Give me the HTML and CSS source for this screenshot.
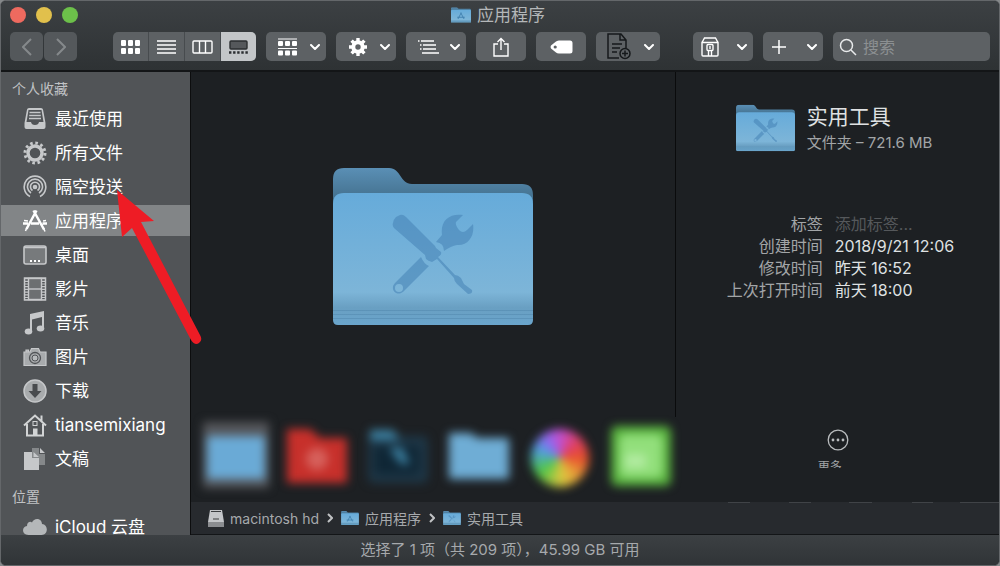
FILE: index.html
```html
<!DOCTYPE html>
<html lang="zh-CN">
<head>
    <meta charset="UTF-8">
    <meta name="viewport" content="width=device-width, initial-scale=1.0">
    <title>应用程序</title>
    <link rel="stylesheet" href="styles.css">
</head>
<body>
    <!-- shared shapes -->
    <svg class="defs" width="0" height="0" aria-hidden="true">
        <defs>
            <linearGradient id="folderBack" x1="0" y1="0" x2="0" y2="1">
                <stop offset="0" stop-color="#5a8fb5"/>
                <stop offset="1" stop-color="#3d6883"/>
            </linearGradient>
            <linearGradient id="folderFront" x1="0" y1="0" x2="0" y2="1">
                <stop offset="0" stop-color="#66abda"/>
                <stop offset="0.75" stop-color="#7db5d8"/>
                <stop offset="0.87" stop-color="#699fc2"/>
                <stop offset="1" stop-color="#6aa5cc"/>
            </linearGradient>
            <symbol id="folder" viewBox="0 0 200 157">
                <path fill="url(#folderBack)" d="M0 40V11Q0 0 11 0H56C68 0 67 16 79 16H189Q200 16 200 27V40z"/>
                <path fill="url(#folderFront)" d="M0 36Q0 25 11 25H189Q200 25 200 36V152Q200 157 195 157H5Q0 157 0 152z"/>
                <path stroke="#4f86ab" stroke-opacity="0.5" d="M0 142.500H200M0 146.500H200M0 150.500H200"/>
            </symbol>
            <symbol id="tools" viewBox="0 0 200 157">
                <path d="M60 55Q60 52 63 49L67 47Q70 46 73 49L102 78L103 80L108 84Q109 87 105 89L122 107Q125 107 128 110L131 116L139 122Q140 126 135 126L124 116Q121 113 121 110L104 91L99 94Q95 93 93 91L92 87L61 60Q59 57 60 55z"/>
                <path d="M103 74L109 67C107 52 117 45 130 47L123 54Q122 57 126 62Q130 66 134 62L140 56C142 68 135 78 124 77Q118 78 111 83Q111 75 103 74z"/>
                <path fill-rule="evenodd" d="M88 89Q91 96 96 98L72 122C64 131 56 121 62 115zM70 120A4 4 0 1 0 62 120A4 4 0 1 0 70 120z"/>
            </symbol>
            <symbol id="appmark" viewBox="0 0 200 157">
                <path fill="none" stroke="currentColor" stroke-width="9" d="M70 118L103 55M97 55L130 118M62 101H138"/>
            </symbol>
            <symbol id="chevron" viewBox="0 0 10 6">
                <path fill="none" stroke="currentColor" stroke-width="2" stroke-linecap="round" stroke-linejoin="round" d="M1 1L5 5L9 1"/>
            </symbol>
        </defs>
    </svg>

    <div class="window">
        <header class="titlebar">
            <div class="title-row">
                <div class="lights">
                    <button class="light light-close" aria-label="关闭"></button>
                    <button class="light light-min" aria-label="最小化"></button>
                    <button class="light light-max" aria-label="缩放"></button>
                </div>
                <h1 class="title">
                    <svg class="title-icon" viewBox="0 0 200 157"><use href="#folder"/><use href="#appmark"/></svg>
                    应用程序
                </h1>
            </div>

            <div class="toolbar">
                <div class="nav">
                    <button class="btn btn-nav" aria-label="后退"><svg width="10" height="18" viewBox="0 0 10 18"><path d="M9 1L1 9L9 17"/></svg></button>
                    <button class="btn btn-nav" aria-label="前进"><svg width="10" height="18" viewBox="0 0 10 18"><path d="M1 1L9 9L1 17"/></svg></button>
                </div>

                <div class="segmented">
                    <button aria-label="图标">
                        <svg width="19" height="14" viewBox="0 0 19 14" fill="#fff"><rect width="5" height="6" rx="1"/><rect x="7" width="5" height="6" rx="1"/><rect x="14" width="5" height="6" rx="1"/><rect y="8" width="5" height="6" rx="1"/><rect x="7" y="8" width="5" height="6" rx="1"/><rect x="14" y="8" width="5" height="6" rx="1"/></svg>
                    </button>
                    <button aria-label="列表">
                        <svg width="19" height="14" viewBox="0 0 19 14"><path stroke="#fff" stroke-width="1.300" d="M0 1H19M0 5H19M0 9H19M0 13H19"/></svg>
                    </button>
                    <button aria-label="分栏">
                        <svg width="21" height="14" viewBox="0 0 21 14" fill="none" stroke="#fff" stroke-width="1.400"><rect x="1" y="1" width="19" height="12" rx="1"/><path d="M7.500 1V13M13.500 1V13"/></svg>
                    </button>
                    <button class="active" aria-label="画廊">
                        <svg width="19" height="14" viewBox="0 0 19 14"><rect x="1" y="1" width="17" height="8" rx="1" fill="#55585b" stroke="#2b2e30" stroke-width="1.400"/><path stroke="#2b2e30" stroke-width="2.400" stroke-dasharray="2.400 1.700" d="M0 12.500H19"/></svg>
                    </button>
                </div>

                <button class="btn btn-menu" aria-label="分组">
                    <svg width="20" height="18" viewBox="0 0 20 18" fill="#fff"><path stroke="#fff" d="M0 1H19M0 10.500H19"/><rect y="3" width="5" height="5" rx="1"/><rect x="7" y="3" width="5" height="5" rx="1"/><rect x="14" y="3" width="5" height="5" rx="1"/><rect y="12.500" width="5" height="5" rx="1"/><rect x="7" y="12.500" width="5" height="5" rx="1"/><rect x="14" y="12.500" width="5" height="5" rx="1"/></svg>
                    <svg class="chev"><use href="#chevron"/></svg>
                </button>
                <button class="btn btn-menu" aria-label="操作">
                    <svg width="20" height="20" viewBox="-10 -10 20 20"><circle r="4.700" fill="none" stroke="#fff" stroke-width="4"/><path stroke="#fff" stroke-width="3.400" d="M0-9V-5M0 9V5M-9 0H-5M9 0H5M-6.400-6.400L-4-4M6.400 6.400L4 4M-6.400 6.400L-4 4M6.400-6.400L4-4"/></svg>
                    <svg class="chev"><use href="#chevron"/></svg>
                </button>
                <button class="btn btn-menu" aria-label="排列">
                    <svg width="22" height="14" viewBox="0 0 22 14"><path stroke="#fff" stroke-width="1.300" d="M0 1H1.500M3 1H16M2 5H3.500M5 5H18M2 9H3.500M5 9H18M4 13H21"/></svg>
                    <svg class="chev"><use href="#chevron"/></svg>
                </button>
                <button class="btn btn-wide" aria-label="共享">
                    <svg width="16" height="20" viewBox="0 0 16 20" fill="none" stroke="#fff" stroke-width="1.400"><path d="M5 7H1V19H15V7H11M8 13V1.500M4.500 5L8 1.500L11.500 5"/></svg>
                </button>
                <button class="btn btn-wide" aria-label="标签">
                    <svg width="23" height="14" viewBox="0 0 23 14"><path fill="#fff" fill-rule="evenodd" d="M6 1.500Q8 0.500 9 0.500H20Q22.500 0.500 22.500 3V11Q22.500 13.500 20 13.500H9Q7 13.500 6 12.500L1 8.500Q0 7 1 5.500zM6.800 7A1.600 1.600 0 1 0 3.600 7A1.600 1.600 0 1 0 6.800 7z"/></svg>
                </button>
                <button class="btn btn-doc" aria-label="新建文件">
                    <svg width="24" height="27" viewBox="0 0 24 27" fill="none" stroke="#16191b" stroke-width="1.500"><path d="M12 25H1V1H14L19 7V15M13 1V7H19M5 11H15M5 15H13M5 19H10"/><circle cx="18" cy="20.500" r="5"/><path d="M15 20.500H21M18 17.500V23.500"/></svg>
                    <svg class="chev"><use href="#chevron"/></svg>
                </button>

                <button class="btn btn-menu btn-archive" aria-label="压缩">
                    <svg width="18" height="20" viewBox="0 0 18 20" fill="none" stroke="#fff" stroke-width="1.400"><path d="M1 5.500V18Q1 19 2 19H16Q17 19 17 18V5.500zM1 5.500L3.500 1H14.500L17 5.500"/><rect x="6" y="7.500" width="6" height="6" rx="1"/><path d="M9 9V12M7.500 14V19M10.500 14V19"/></svg>
                    <svg class="chev"><use href="#chevron"/></svg>
                </button>
                <button class="btn btn-menu btn-add" aria-label="添加">
                    <svg width="16" height="16" viewBox="0 0 16 16"><path stroke="#fff" stroke-width="1.500" d="M8 1V15M1 8H15"/></svg>
                    <svg class="chev"><use href="#chevron"/></svg>
                </button>
                <label class="search">
                    <svg width="18" height="18" viewBox="0 0 18 18" fill="none" stroke="#e8eaeb" stroke-width="1.500"><circle cx="7.500" cy="7.500" r="6"/><path d="M12 12L17 17"/></svg>
                    <input type="search" placeholder="搜索" aria-label="搜索">
                </label>
            </div>
        </header>

        <main class="main">
            <nav class="sidebar">
                <h2>个人收藏</h2>
                <ul>
                    <li><a href="#"><svg viewBox="0 0 24 24"><path fill="#c6c8ca" fill-rule="evenodd" d="M4 2.500Q4.300 1 6 1H18Q19.700 1 20 2.500L22.500 16V20Q22.500 22 20.500 22H3.500Q1.500 22 1.500 20V16zM5.500 3L3.500 15H8Q8.500 18 12 18T16 15H20.500L18.500 3z"/><path stroke="#c6c8ca" stroke-width="1.300" d="M6.500 5.500H17.500M6.200 8.500H17.800M6 11.500H18"/></svg>最近使用</a></li>
                    <li><a href="#"><svg viewBox="-12 -12 24 24"><circle r="7" fill="none" stroke="#c6c8ca" stroke-width="3.400"/><circle r="10" fill="none" stroke="#c6c8ca" stroke-width="3" stroke-dasharray="2.600 2.636"/></svg>所有文件</a></li>
                    <li><a href="#"><svg viewBox="0 0 24 24" fill="none" stroke="#c6c8ca" stroke-width="1.600"><path d="M7 21.500A10.800 10.800 0 1 1 17 21.500M8 18A7.500 7.500 0 1 1 16 18M9.500 15.500A4.500 4.500 0 1 1 14.500 15.500"/><circle cx="12" cy="12" r="1.500" fill="#c6c8ca"/></svg>隔空投送</a></li>
                    <li><a class="selected" href="#"><svg viewBox="0 0 24 24" fill="none" stroke="#fff" stroke-width="2.500"><path d="M10.500 1.500L21 20.500M13.500 1.500L3.500 20M0 14.500H5M8 14.500H16M19.500 14.500H24"/><path stroke-width="1.500" d="M20 18L22 22.500M4 18L2.500 22M1 11.500L5 12M23 11.500L20 12"/></svg>应用程序</a></li>
                    <li><a href="#"><svg viewBox="0 0 24 24"><rect x="1" y="3" width="22" height="18" rx="2" fill="#777a7c" stroke="#c6c8ca" stroke-width="1.600"/><path stroke="#c6c8ca" stroke-width="1.600" d="M1 4.500H23"/><path stroke="#fff" stroke-width="2" stroke-dasharray="2 2" d="M7 18H17"/></svg>桌面</a></li>
                    <li><a href="#"><svg viewBox="0 0 24 24" fill="none" stroke="#c6c8ca"><rect x="1.500" y="1" width="21" height="22" stroke-width="1.500"/><rect x="5.500" y="1.500" width="13" height="21" fill="#6c6f71" stroke-width="1.400"/><path stroke-width="1.400" d="M5.500 12H18.500"/><path stroke-width="3" stroke-dasharray="1.200 1.500" d="M3.500 1V23M20.500 1V23"/></svg>影片</a></li>
                    <li><a href="#"><svg viewBox="0 0 24 24" fill="#c6c8ca"><path d="M7 3L21 0V17H19V6L9 8.500V20H7z"/><ellipse cx="5.500" cy="20.500" rx="3.800" ry="3"/><ellipse cx="17.500" cy="17.500" rx="3.800" ry="3"/></svg>音乐</a></li>
                    <li><a href="#"><svg viewBox="0 0 24 24"><path fill="#a8abad" stroke="#c6c8ca" stroke-width="1.200" d="M1 7H7L8.500 3.500H15.500L17 7H23V20.500H1zM3 5H5.500V7H3z"/><circle cx="12" cy="13" r="5.500" fill="#a8abad" stroke="#515457" stroke-width="1.300"/><circle cx="12" cy="13" r="3" fill="#b8bbbd" stroke="#515457"/></svg>图片</a></li>
                    <li><a href="#"><svg viewBox="0 0 24 24"><circle cx="12" cy="12" r="11" fill="#a8abad" stroke="#c6c8ca" stroke-width="1.500"/><path fill="#484b4e" d="M9.500 5H14.500V12H18.500L12 19L5.500 12H9.500z"/></svg>下载</a></li>
                    <li><a href="#"><svg viewBox="0 0 24 24"><path fill="none" stroke="#d2d4d5" stroke-width="2" d="M1 12.500L12 2.500L23 12.500M4 11V22.500H20V11M18.500 8V2.500"/><rect x="10" y="8.500" width="4" height="4" fill="none" stroke="#d2d4d5"/><rect x="10" y="15.500" width="4.500" height="7" fill="#d2d4d5"/></svg>tiansemixiang</a></li>
                    <li><a href="#"><svg viewBox="0 0 24 24"><path fill="#85888a" d="M9 1H16V7H22V18H9z"/><path fill="#c6c8ca" d="M17 1L22 6H17zM1 5H9V11H16V23H1zM10.500 5L16 10H10.500z"/></svg>文稿</a></li>
                </ul>
                <h2>位置</h2>
                <ul>
                    <li><a href="#"><svg viewBox="0 0 24 24"><path fill="#b4b7b9" d="M5.500 20C-1.500 20-1.500 11.500 4 11C4 7 7.500 6 9 7.500C11 2 19 3 19 9C25.500 9.500 25.500 20 18.500 20z"/></svg>iCloud 云盘</a></li>
                </ul>
            </nav>

            <div class="content">
                <div class="browser">
                    <section class="gallery">
                        <div class="preview">
                            <svg class="preview-icon" viewBox="0 0 200 157"><use href="#folder"/><use class="ink" href="#tools"/></svg>
                        </div>
                        <div class="strip">
                            <button class="thumb thumb-selected" aria-label="实用工具"><svg viewBox="0 0 66 66"><rect x="4" y="14" width="58" height="43" fill="#6aaad6"/></svg></button>
                            <button class="thumb" aria-label="红色文件夹"><svg viewBox="0 0 66 66"><path fill="#c7302b" d="M3 7H26L36 16H63V61H3z"/><circle cx="33" cy="37" r="11" fill="#d6605b"/></svg></button>
                            <button class="thumb" aria-label="深色文件夹"><svg viewBox="0 0 66 66"><rect x="3" y="14" width="60" height="47" rx="5" fill="#1e3646"/><rect x="10" y="24" width="44" height="28" rx="3" fill="#0f2635"/><path fill="#3c81a2" d="M5 8H28L35 18H5zM24 26H37L45 42H36z"/></svg></button>
                            <button class="thumb" aria-label="文件夹"><svg viewBox="0 0 66 66"><path fill="#6fadd5" d="M3 11H25L31 16H63V57H3z"/></svg></button>
                            <button class="thumb" aria-label="色轮"><span class="wheel"></span></button>
                            <button class="thumb" aria-label="绿色应用"><svg viewBox="0 0 66 66"><rect x="3" y="4" width="60" height="60" rx="6" fill="#57b13d"/><rect x="11" y="12" width="44" height="44" rx="6" fill="#92df7b"/><path fill="#b1eba0" d="M17 32H38V46H17z"/></svg></button>
                        </div>
                    </section>

                    <aside class="inspector">
                        <div class="file">
                            <svg class="file-icon" viewBox="0 0 200 157"><use href="#folder"/><use class="ink" href="#tools"/></svg>
                            <div>
                                <h2 class="file-name">实用工具</h2>
                                <p class="file-kind">文件夹 – 721.6 MB</p>
                            </div>
                        </div>
                        <dl class="info">
                            <dt><label for="tags">标签</label></dt>
                            <dd><input id="tags" type="text" placeholder="添加标签..."></dd>
                            <dt>创建时间</dt>
                            <dd>2018/9/21 12:06</dd>
                            <dt>修改时间</dt>
                            <dd>昨天 16:52</dd>
                            <dt>上次打开时间</dt>
                            <dd>前天 18:00</dd>
                        </dl>
                        <button class="more">
                            <svg width="22" height="22" viewBox="0 0 22 22"><circle cx="11" cy="11" r="9.800" fill="none" stroke="#b9bcbe" stroke-width="1.300"/><g fill="#b9bcbe"><circle cx="6" cy="11" r="1.400"/><circle cx="11" cy="11" r="1.400"/><circle cx="16" cy="11" r="1.400"/></g></svg>
                            <span>更多</span>
                        </button>
                    </aside>
                </div>

                <div class="pathbar">
                    <svg class="path-disk" viewBox="0 0 16 17"><path fill="#c4c6c9" d="M2 0H14L16 12V16H0V12z"/><path fill="#8b8d90" d="M0 12H16V17H0z"/><path stroke="#3a3c3f" stroke-width="1.200" d="M3 1.500H13M5 9H11"/></svg>
                    <a href="#">macintosh hd</a>
                    <svg class="path-arrow" viewBox="0 0 6 10"><path d="M1 1L5 5L1 9"/></svg>
                    <svg class="path-icon" viewBox="0 0 200 157"><use href="#folder"/><use href="#appmark"/></svg>
                    <a href="#">应用程序</a>
                    <svg class="path-arrow" viewBox="0 0 6 10"><path d="M1 1L5 5L1 9"/></svg>
                    <svg class="path-icon" viewBox="0 0 200 157"><use href="#folder"/><use class="ink" href="#tools"/></svg>
                    <a href="#">实用工具</a>
                </div>
            </div>
        </main>

        <footer class="status">选择了 1 项（共 209 项），45.99 GB 可用</footer>

        <!-- red pointer over the sidebar -->
        <svg class="pointer" width="90" height="160" viewBox="0 0 90 160" aria-hidden="true">
            <path fill="#ee1c25" d="M4 3L9 50L19 41L78 153Q82 159 86 156Q90 153 87 148L28 35L41 34z"/>
        </svg>
    </div>
</body>
</html>
```
FILE: styles.css
```css
* {
    box-sizing: border-box;
}
body {
    margin: 0;
    background-color: #85888a;
    font-family: Inter, "Noto Sans CJK SC", sans-serif;
    color: #fff;
}
h1, h2, p, ul, dl, dd {
    margin: 0;
    padding: 0;
    font-weight: 400;
}
ul {
    list-style: none;
}
button {
    border: none;
    padding: 0;
    font: inherit;
    color: #fff;
    background: none;
}
input {
    border: none;
    padding: 0;
    outline: none;
    font: inherit;
    color: #fff;
    background: none;
    width: 100%;
    min-width: 0;
}
a {
    color: inherit;
    text-decoration: none;
}
svg {
    flex: none;
}
.defs {
    position: absolute;
}
.window {
    position: relative;
    display: flex;
    flex-direction: column;
    height: 100vh;
    border: 1px solid #64676a;
    border-radius: 6px;
    overflow: hidden;
    background-color: #1d2023;
}

/* title bar */
.titlebar {
    height: 71px;
    flex: none;
    padding: 4px 9px 0;
    background: linear-gradient(#3c4043, #2e3234);
    border-bottom: 2px solid #131517;
}
.title-row {
    display: grid;
    grid-template-columns: 1fr auto 1fr;
    align-items: center;
    height: 20px;
    margin-bottom: 7px;
}
.lights {
    display: flex;
    gap: 10px;
}
.light {
    width: 16px;
    height: 16px;
    border-radius: 50%;
}
.light-close {
    background-color: #ee6a5f;
}
.light-min {
    background-color: #e1c04c;
}
.light-max {
    background-color: #6cc04a;
}
.title {
    display: flex;
    align-items: center;
    gap: 6px;
    padding-right: 4px;
    font-size: 17px;
    line-height: 20px;
    color: #b4b7b9;
}
.title-icon {
    width: 20px;
    height: 16px;
    color: #3f7fae;
}
.toolbar {
    display: flex;
    gap: 10px;
    height: 29px;
}
.nav {
    display: flex;
    gap: 1px;
    margin-right: 26px;
}
.btn, .segmented, .search {
    border-radius: 5px;
    background-color: #5d6164;
}
.btn {
    display: flex;
    align-items: center;
    justify-content: center;
    flex: none;
}
.btn-nav {
    width: 33px;
    background-color: #54585b;
}
.btn-nav path {
    fill: none;
    stroke: #85898b;
    stroke-width: 2;
}
.btn-menu {
    width: 60px;
    justify-content: space-between;
    padding: 0 6px 0 12px;
}
.btn-archive {
    margin-left: 23px;
    padding-left: 8px;
}
.btn-add {
    padding-left: 8px;
}
.btn-wide {
    width: 50px;
}
.btn-doc {
    width: 64px;
    justify-content: space-between;
    padding: 0 6px 0 11px;
}
.chev {
    width: 10px;
    height: 6px;
}
.segmented {
    display: flex;
    width: 143px;
    flex: none;
    overflow: hidden;
}
.segmented button {
    flex: 1;
    display: flex;
    align-items: center;
    justify-content: center;
    border-right: 1px solid #474b4e;
}
.segmented .active {
    background-color: #c3c6c8;
    border-right: none;
}
.search {
    flex: 1;
    display: flex;
    align-items: center;
    gap: 6px;
    padding: 0 6px;
    font-size: 16px;
}
.search input::placeholder {
    color: #8c9092;
}

/* sidebar */
.main {
    flex: 1;
    display: flex;
    min-height: 0;
}
.sidebar {
    width: 190px;
    flex: none;
    overflow: hidden;
    background-color: #515457;
    border-right: 1px solid #0c0d0e;
}
.sidebar h2 {
    padding: 7px 11px 4px;
    font-size: 14px;
    line-height: 20px;
    color: #c0c2c4;
}
.sidebar ul {
    display: flex;
    flex-direction: column;
    gap: 3px;
}
.sidebar ul + h2 {
    padding-top: 13px;
}
.sidebar a {
    display: flex;
    align-items: center;
    gap: 8px;
    height: 31px;
    padding-left: 22px;
    font-size: 17px;
    line-height: 24px;
    white-space: nowrap;
}
.sidebar .selected {
    background-color: #828587;
}
.sidebar svg {
    width: 24px;
    height: 24px;
}

/* gallery view */
.content {
    flex: 1;
    display: flex;
    flex-direction: column;
    min-width: 0;
}
.browser {
    flex: 1;
    display: flex;
    min-height: 0;
}
.gallery {
    flex: 1;
    display: flex;
    flex-direction: column;
    min-width: 0;
}
.preview {
    flex: 1;
    display: flex;
    align-items: center;
    justify-content: center;
    padding-top: 3px;
    border-right: 1px solid #0a0b0c;
}
.preview-icon {
    width: 200px;
    height: 157px;
}
.ink {
    fill: #4582b5;
    opacity: 0.55;
}
.strip {
    display: flex;
    gap: 15px;
    height: 85px;
    padding: 5px 12px 0;
}
.thumb {
    width: 66px;
    height: 66px;
    flex: none;
    filter: blur(5px);
}
.thumb svg {
    display: block;
    width: 66px;
    height: 66px;
}
.thumb-selected {
    background-color: #55565a;
}
.wheel {
    display: block;
    width: 58px;
    height: 58px;
    margin: 5px auto 0;
    border-radius: 50%;
    background: conic-gradient(#c44fd0, #e0405f 50deg, #e8512c 90deg, #e6a33a 140deg, #ddc93f 175deg, #4fc74a 235deg, #4fa0dd 290deg, #8c6af0 325deg, #c44fd0);
}

/* inspector */
.inspector {
    width: 40%;
    flex: none;
    display: flex;
    flex-direction: column;
    padding: 32px 20px 34px 60px;
}
.file {
    display: flex;
    gap: 12px;
}
.file-icon {
    width: 59px;
    height: 48px;
}
.file-name {
    font-size: 21px;
    line-height: 26px;
    color: #dfe1e2;
}
.file-kind {
    font-size: 15px;
    line-height: 26px;
    color: #a2a5a7;
}
.info {
    display: grid;
    grid-template-columns: 87px 1fr;
    column-gap: 12px;
    margin-top: 57px;
    font-size: 16px;
    line-height: 22px;
    color: #dfe1e2;
    white-space: nowrap;
}
.info dt {
    justify-self: end;
    color: #a2a5a7;
}
.info dd {
    height: 22px;
}
.info input {
    display: block;
    height: 22px;
}
.info input::placeholder {
    color: #55585b;
}
.more {
    width: 40px;
    margin: auto 0 0 82px;
    text-align: left;
    color: #a2a5a7;
}
.more svg {
    display: block;
    margin: 0 auto 9px;
}
.more span {
    display: block;
    height: 8px;
    overflow: hidden;
    font-size: 12px;
    line-height: 13px;
    white-space: nowrap;
}

/* bottom bars */
.pathbar {
    display: flex;
    align-items: center;
    height: 33px;
    padding-left: 17px;
    font-size: 14px;
    color: #a6a9ac;
    background-color: #272a2e;
    /* broken rule along the top edge, measured from the right */
    background-image: linear-gradient(to left,
        #404347 39px, transparent 39px 66px,
        #404347 66px 87px, transparent 87px 127px,
        #404347 127px 150px, transparent 150px 188px,
        #404347 188px 210px, transparent 210px 249px,
        #404347 249px 271px, transparent 271px);
    background-size: 100% 1px;
    background-repeat: no-repeat;
    border-bottom: 1px solid #131517;
}
.path-disk {
    width: 16px;
    height: 17px;
}
.path-icon {
    width: 18px;
    height: 14px;
    color: #3f7fae;
}
.path-arrow {
    width: 6px;
    height: 10px;
    margin: 0 8px;
}
.path-arrow path {
    fill: none;
    stroke: #c0c2c4;
    stroke-width: 2;
}
.pathbar a {
    margin-left: 6px;
}
.status {
    flex: none;
    height: 30px;
    font-size: 15px;
    line-height: 30px;
    text-align: center;
    color: #a6a9ac;
    background: linear-gradient(#3c4043, #303437);
}

.pointer {
    position: absolute;
    left: 112px;
    top: 186px;
}
```
